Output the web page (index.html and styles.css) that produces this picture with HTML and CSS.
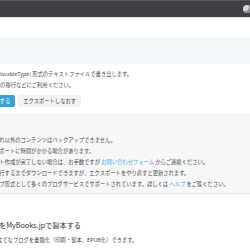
FILE: index.html
```html
<!DOCTYPE html>
<html lang="ja">

<head>
  <meta charset="UTF-8" />
  <title>エクスポート</title>
  <link rel="stylesheet" href="styles.css">
</head>

<body>
  <!-- グローバルヘッダー -->
  <div class="topbar">
    <span class="user-icon"></span>
  </div>
  <div class="subhead"></div>
  <div class="tabs"></div>

  <!-- 本文 -->
  <div class="main">
    <p class="lead">
      エントリーを(MovableType) 形式のテキストファイルで書き出します。<br />
      ほかのブログへの移行などにご利用ください。
    </p>
    <div class="actions">
      <button class="btn btn-primary">エクスポートする</button>
      <button class="btn">エクスポートしなおす</button>
    </div>

    <div class="notes">
      <p>画像などそれ以外のコンテンツはバックアップできません。</p>
      <p>初回エクスポートに時間がかかる場合があります。</p>
      <p>エクスポート作成が完了しない場合は、お手数ですが <a href="#">お問い合わせフォーム</a> からご連絡ください。</p>
      <p>もう一度実行するまでダウンロードできますが、エクスポートをやり直すと更新されます。</p>
      <p>バックアップ形式として多くのブログサービスでサポートされています。詳しくは <a href="#">ヘルプ</a> をご覧ください。</p>
    </div>

    <div class="mybooks">
      <h2>このブログをMyBooks.jpで製本する</h2>
      <p>MyBooks.jpではてなブログを書籍化（印刷・製本、EPUB化）できます。</p>
    </div>
  </div>
</body>

</html>
```

FILE: styles.css
```css
body {
  margin: 0;
  font-family: "Noto Sans CJK JP", "Noto Sans", sans-serif;
  color: #4a4a4a;
  background: #fff;
  overflow: hidden;
}

.topbar {
  height: 16px;
  background: #3d3f44;
  border-top: 1px solid #55575c;
  border-bottom: 1px solid #e6e6e6;
  display: flex;
  justify-content: flex-end;
  align-items: center;
}

.user-icon {
  width: 8px;
  height: 8px;
  margin-right: -1px;
  border-radius: 50%;
  background: #d4d5d7;
  box-shadow: inset -2px -2px 0 #8a8c90;
}

.subhead {
  height: 19px;
}

.tabs {
  height: 27px;
  background: #f3f8fb;
}

.main {
  margin-left: -37px;
  white-space: nowrap;
}

.lead {
  margin: 5px 0 0;
  font-size: 5.3px;
  line-height: 11px;
}

.actions {
  display: flex;
  gap: 3px;
  margin-top: 4px;
}

.btn {
  font-family: inherit;
  font-size: 5.3px;
  height: 12px;
  padding: 0 5px;
  border: none;
  border-radius: 2px;
  background: #f2f2f2;
  color: #444;
}

.btn-primary {
  background: #3aa0d8;
  color: #fff;
}

.notes {
  margin-top: 6px;
  padding: 22px 0 3px 10px;
  background: #f6f7f8;
  border-bottom: 1px solid #e8e8e8;
}

.notes p {
  margin: 0;
  font-size: 5.3px;
  line-height: 11px;
}

.notes a {
  color: #55a3d9;
  text-decoration: none;
}

.mybooks h2 {
  margin: 25px 0 0;
  font-size: 7.2px;
  line-height: 12px;
  font-weight: normal;
  color: #333;
}

.mybooks p {
  margin: 4px 0 0;
  font-size: 5.3px;
  line-height: 11px;
}
```
